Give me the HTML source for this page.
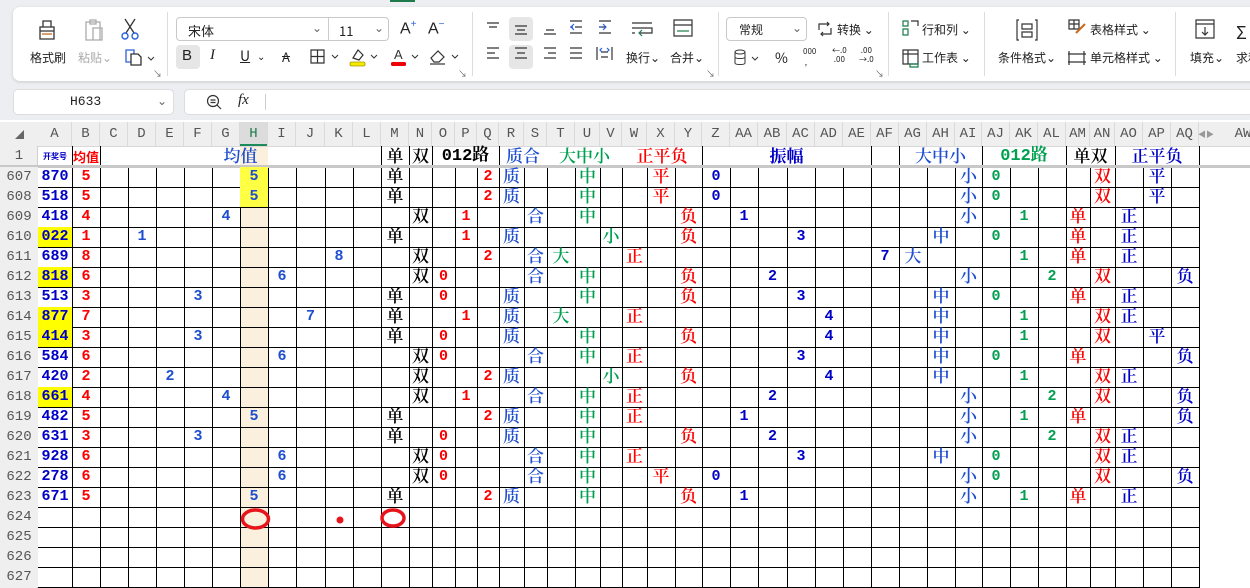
<!DOCTYPE html>
<html><head><meta charset="utf-8">
<style>
*{margin:0;padding:0;box-sizing:border-box}
body{width:1250px;height:588px;overflow:hidden;background:#eceef1;position:relative;font-family:"Liberation Sans","Noto Sans CJK SC",sans-serif;}
.abs{position:absolute}
.card{position:absolute;left:13px;top:7px;width:1250px;height:74px;background:#fff;border-radius:7px;box-shadow:0 1px 3px rgba(0,0,0,.15)}
.t{position:absolute;font-size:12px;color:#222;white-space:nowrap;font-family:"Noto Sans CJK SC",sans-serif}
.sep{position:absolute;top:12px;width:1px;height:64px;background:#dcdcdc}
.box{position:absolute;border:1px solid #c9c9c9;border-radius:4px;background:#fff}
.grid{position:absolute;left:0;width:1250px;height:20px;display:grid;grid-template-columns:38px 34px 28px 28px 28px 28px 28px 28px 28px 28px 29px 28px 28px 28px 23px 23px 22px 22px 25px 23px 28px 25px 22px 25px 28px 27px 28px 28px 29px 28px 28px 28px 28px 28px 28px 27px 28px 28px 28px 24px 25px 28px 28px 28px;}
.grid>*{grid-row:1;text-align:center;line-height:20px;font-size:17px;font-weight:600;font-family:"Liberation Mono","Noto Serif CJK SC",serif;text-decoration:none;font-style:normal;white-space:nowrap;overflow:visible}
.grid>i:not(.dg):not(.rd):not(.bd):not(.gd):not(.cA):not(.cB){position:relative;top:2px}
.grid>s{grid-column:1;color:#555;font-size:14px;font-weight:normal;background:#efefef;font-family:"Liberation Mono",monospace}
.cA{grid-column:2;color:#0000c8;font-weight:bold!important;font-size:15px!important}
.cB{grid-column:3;color:#f00;font-weight:bold!important;font-size:15px!important}
.cC{grid-column:4}.cD{grid-column:5}.cE{grid-column:6}.cF{grid-column:7}.cG{grid-column:8}.cH{grid-column:9}.cI{grid-column:10}.cJ{grid-column:11}.cK{grid-column:12}
.dg{color:#1f4fd0;font-size:15px!important;font-weight:bold!important}
.cM{grid-column:14;color:#000}.cN{grid-column:15;color:#000}
.cO{grid-column:16}.cP{grid-column:17}.cQ{grid-column:18}
.rd{color:#f00;font-weight:bold;font-size:15px!important}
.cR{grid-column:19;color:#1f4fd0}.cS{grid-column:20;color:#1f4fd0}
.cT{grid-column:21;color:#00a050}.cU{grid-column:22;color:#00a050}.cV{grid-column:23;color:#00a050}
.cW{grid-column:24;color:#f00}.cX{grid-column:25;color:#f00}.cY{grid-column:26;color:#f00}
.cZ{grid-column:27}.cAA{grid-column:28}.cAB{grid-column:29}.cAC{grid-column:30}.cAD{grid-column:31}.cAF{grid-column:33}
.bd{color:#0000c8;font-weight:bold;font-size:15px!important}
.cAG{grid-column:34;color:#1f4fd0}.cAH{grid-column:35;color:#1f4fd0}.cAI{grid-column:36;color:#1f4fd0}
.cAJ{grid-column:37}.cAK{grid-column:38}.cAL{grid-column:39}
.gd{color:#00a050;font-weight:bold;font-size:15px!important}
.cAM{grid-column:40;color:#f00}.cAN{grid-column:41;color:#f00}
.cAO{grid-column:42;color:#0000c8}.cAP{grid-column:43;color:#0000c8}.cAQ{grid-column:44;color:#0000c8}
.yl{background:#ffff00}.yh{background:#ffff44}
.ch{position:absolute;top:122px;height:24px;line-height:24px;text-align:center;color:#555;font-size:14px;font-family:"Liberation Mono",monospace;border-right:1px solid #dadada}
.h1{position:absolute;top:147px;height:19px;line-height:23px;text-align:center;font-size:17px;font-family:"Liberation Mono","Noto Serif CJK SC",serif;font-weight:600;white-space:nowrap;overflow:visible}
</style></head><body>
<div class="abs" style="left:390px;top:0;width:25px;height:2px;background:#1e7b4c"></div>
<div class="card"></div>
<svg class="abs" style="left:30px;top:15px" width="130" height="28" viewBox="0 0 130 28">
 <path d="M10 12h14v12H10z M13 12V6h8v6 M10 16h14" fill="none" stroke="#333" stroke-width="1.3"/><path d="M12 19h10" stroke="#c86a1a" stroke-width="1.3"/>
 <path d="M56 7h14v18H56z M60 5h6v4h-6z M63 13h9v12h-9z" fill="none" stroke="#aaa" stroke-width="1.3"/>
 <path d="M95 4l9 14M105 4l-9 14" stroke="#333" stroke-width="1.3"/><circle cx="95" cy="21" r="3" fill="none" stroke="#2a62d9" stroke-width="1.4"/><circle cx="105" cy="21" r="3" fill="none" stroke="#2a62d9" stroke-width="1.4"/>
</svg>
<div class="t" style="left:30px;top:49px">格式刷</div>
<div class="t" style="left:78px;top:49px;color:#aaa">粘贴⌄</div>
<svg class="abs" style="left:124px;top:48px" width="34" height="18"><path d="M2 2h8v12H2z" fill="none" stroke="#2a62d9" stroke-width="1.3"/><path d="M7 6h7l3 3v8H7z" fill="#fff" stroke="#333" stroke-width="1.3"/><path d="M24 9l3 3 3-3" fill="none" stroke="#333"/></svg>
<div class="t" style="left:153px;top:67px;font-size:9px;color:#666">↘</div>
<div class="sep" style="left:167px"></div>
<div class="box" style="left:176px;top:17px;width:213px;height:24px"></div>
<div class="abs" style="left:328px;top:18px;width:1px;height:22px;background:#ccc"></div>
<div class="t" style="left:188px;top:21px;font-size:13px">宋体</div>
<div class="t" style="left:312px;top:19px;color:#666">⌄</div>
<div class="t" style="left:339px;top:21px;font-size:13px">11</div>
<div class="t" style="left:374px;top:19px;color:#666">⌄</div>
<div class="t" style="left:400px;top:19px;font-size:16px;font-family:'Liberation Sans'">A<sup style="font-size:10px;color:#2a62d9">+</sup></div>
<div class="t" style="left:428px;top:19px;font-size:16px;font-family:'Liberation Sans'">A<sup style="font-size:10px;color:#2a62d9">−</sup></div>
<div class="abs" style="left:176px;top:45px;width:24px;height:24px;background:#e6e6e6;border-radius:4px"></div>
<div class="t" style="left:182px;top:47px;font-size:15px;font-family:'Liberation Sans'">B</div>
<div class="t" style="left:210px;top:47px;font-size:15px;font-family:'Liberation Serif';font-style:italic">I</div>
<div class="t" style="left:240px;top:46px;font-size:14px;text-decoration:underline">U</div><div class="t" style="left:257px;top:48px;font-size:10px">⌄</div>
<div class="t" style="left:282px;top:47px;font-size:13px;text-decoration:line-through">A</div>
<svg class="abs" style="left:310px;top:48px" width="30" height="18"><path d="M1 2h13v13H1zM7.5 2v13M1 8.5h13" fill="none" stroke="#333" stroke-width="1.2"/><path d="M22 7l3 3 3-3" fill="none" stroke="#333"/></svg>
<svg class="abs" style="left:349px;top:46px" width="30" height="22"><path d="M4 12l5-8 5 5-4 5z" fill="none" stroke="#333" stroke-width="1.2"/><rect x="1" y="16" width="15" height="4" rx="1.5" fill="#f5e800" stroke="#aa9a00" stroke-width=".8"/><path d="M22 9l3 3 3-3" fill="none" stroke="#333"/></svg>
<svg class="abs" style="left:390px;top:46px" width="30" height="22"><text x="4" y="13" font-size="13" font-family="Liberation Sans" fill="#333">A</text><rect x="1" y="16" width="15" height="4" rx="1.5" fill="#e00"/><path d="M22 9l3 3 3-3" fill="none" stroke="#333"/></svg>
<svg class="abs" style="left:429px;top:46px" width="32" height="22"><path d="M2 12l7-7 6 6-5 5H5z" fill="none" stroke="#333" stroke-width="1.2"/><path d="M1 18h15" stroke="#333" stroke-width="1.2"/><path d="M23 9l3 3 3-3" fill="none" stroke="#333"/></svg>
<div class="t" style="left:458px;top:67px;font-size:9px;color:#666">↘</div>
<div class="sep" style="left:472px"></div>
<div class="abs" style="left:509px;top:17px;width:24px;height:24px;background:#e6e6e6;border-radius:4px"></div>
<div class="abs" style="left:509px;top:45px;width:24px;height:24px;background:#e6e6e6;border-radius:4px"></div>
<svg class="abs" style="left:484px;top:18px" width="230" height="52" stroke-width="1.2" fill="none">
 <path d="M3 5h12M5 9h8" stroke="#333"/><path d="M31 8h12M33 12h8M31 16h12" stroke="#333"/><path d="M60 16h12M62 12h8" stroke="#333"/>
 <path d="M86 3h12M91 9h7M86 15h12" stroke="#333"/><path d="M90 6l-3 3 3 3M86 9h3" stroke="#2a62d9"/>
 <path d="M115 3h12M115 9h7M115 15h12" stroke="#333"/><path d="M119 6l3 3-3 3M115 9h3" stroke="#2a62d9"/>
 <path d="M148 5h20M148 10h20v5h-12M148 15h3" stroke="#333"/><path d="M158 12l-3 3 3 3" stroke="#1e7b4c"/>
 <path d="M190 2h18v16h-18zM190 7h18" stroke="#333"/><path d="M193 13h12" stroke="#1e7b4c"/>
 <path d="M3 30h12M3 35h8M3 40h12" stroke="#333"/><path d="M31 30h12M33 35h8M31 40h12" stroke="#333"/><path d="M60 30h12M64 35h8M60 40h12" stroke="#333"/><path d="M86 30h12M86 35h12M86 40h12" stroke="#333"/>
 <path d="M113 29v13M128 29v13M117 34h7M117 39h7" stroke="#333"/><path d="M118 30l-2 2 2 2M123 30l2 2-2 2" stroke="#2a62d9"/>
</svg>
<div class="t" style="left:626px;top:49px">换行⌄</div>
<div class="t" style="left:670px;top:49px">合并⌄</div>
<div class="t" style="left:706px;top:67px;font-size:9px;color:#666">↘</div>
<div class="sep" style="left:718px"></div>
<div class="box" style="left:726px;top:17px;width:81px;height:24px"></div>
<div class="t" style="left:739px;top:21px">常规</div><div class="t" style="left:792px;top:19px;color:#666">⌄</div>
<svg class="abs" style="left:817px;top:21px" width="16" height="16"><path d="M4 3H2v6M12 13h2V7M2 3h10M14 13H4M10 1l2 2-2 2M6 11l-2 2 2 2" fill="none" stroke="#333" stroke-width="1.2"/></svg>
<div class="t" style="left:837px;top:21px">转换 ⌄</div>
<svg class="abs" style="left:734px;top:49px" width="30" height="18"><ellipse cx="6" cy="3" rx="5" ry="2" fill="none" stroke="#333"/><path d="M1 3v11c0 2 10 2 10 0V3M1 8c0 2 10 2 10 0" fill="none" stroke="#333"/><path d="M18 8l3 3 3-3" fill="none" stroke="#333"/></svg>
<div class="t" style="left:775px;top:48px;font-size:14px">%</div>
<div class="t" style="left:803px;top:46px;font-size:8px">000<br>&nbsp;,</div>
<div class="t" style="left:832px;top:46px;font-size:8px;line-height:9px">←.0<br>&nbsp;.00</div>
<div class="t" style="left:859px;top:46px;font-size:8px;line-height:9px">&nbsp;.00<br>→.0</div>
<div class="t" style="left:875px;top:67px;font-size:9px;color:#666">↘</div>
<div class="sep" style="left:888px"></div>
<svg class="abs" style="left:902px;top:20px" width="18" height="50" fill="none" stroke-width="1.2"><path d="M1 1h5v5H1zM1 9h5v6H1z" stroke="#1e7b4c"/><path d="M9 1h7v5" stroke="#333"/><path d="M1 30h15v14H1zM1 34h15M6 30v14" stroke="#333"/><path d="M8 44h8v3H8z" stroke="#1e7b4c"/></svg>
<div class="t" style="left:922px;top:21px">行和列 ⌄</div>
<div class="t" style="left:922px;top:49px">工作表 ⌄</div>
<div class="sep" style="left:984px"></div>
<svg class="abs" style="left:1016px;top:19px" width="22" height="22" fill="none" stroke="#333" stroke-width="1.2"><path d="M3 1H1v20h2M19 1h2v20h-2M6 5h10v5H6zM6 13h10v5H6z"/></svg>
<div class="t" style="left:998px;top:49px">条件格式⌄</div>
<svg class="abs" style="left:1068px;top:19px" width="20" height="50" fill="none" stroke-width="1.2"><path d="M1 1h10v9H1zM1 5h10M6 1v9" stroke="#333"/><path d="M8 14l9-9" stroke="#c86a1a" stroke-width="2"/><path d="M1 32v14M16 32v14M-1 35h19M-1 43h19" stroke="#333"/></svg>
<div class="t" style="left:1090px;top:21px">表格样式 ⌄</div>
<div class="t" style="left:1090px;top:49px">单元格样式 ⌄</div>
<div class="sep" style="left:1175px"></div>
<svg class="abs" style="left:1195px;top:19px" width="22" height="22" fill="none" stroke="#333" stroke-width="1.2"><path d="M1 1h18v18H1zM1 5h18M10 8v8M7 13l3 3 3-3"/></svg>
<div class="t" style="left:1190px;top:49px">填充⌄</div>
<div class="t" style="left:1236px;top:19px;font-size:18px">Σ</div>
<div class="t" style="left:1236px;top:49px">求和</div>
<div class="abs" style="left:13px;top:89px;width:161px;height:26px;background:#fff;border-radius:5px;border:1px solid #ddd"></div>
<div class="t" style="left:70px;top:94px;font-size:13px;font-family:'Liberation Mono'">H633</div>
<div class="t" style="left:157px;top:92px;color:#666">⌄</div>
<div class="abs" style="left:184px;top:89px;width:1070px;height:26px;background:#fff;border-radius:5px;border:1px solid #ddd"></div>
<svg class="abs" style="left:206px;top:94px" width="16" height="16" fill="none" stroke="#333" stroke-width="1.2"><circle cx="7" cy="7" r="5.5"/><path d="M11 11l4 4M4.5 6h5M4.5 8.5h5"/></svg>
<div class="t" style="left:238px;top:92px;font-size:15px;font-family:'Liberation Serif';font-style:italic">fx</div>
<div class="abs" style="left:265px;top:94px;width:1px;height:16px;background:#ccc"></div>
<div class="abs" style="left:0;top:120px;width:1250px;height:468px;background:#fff"></div>
<div class="abs" style="left:0;top:122px;width:1250px;height:25px;background:#efefef;border-bottom:1px solid #d8d8d8"></div>
<div class="abs" style="left:0;top:146px;width:38px;height:442px;background:#efefef;border-right:1px solid #d0d0d0"></div>
<div class="abs" style="left:240px;top:147px;width:28px;height:441px;background:#fbf0de"></div>
<div class="abs" style="left:240px;top:122px;width:28px;height:24px;background:#dcdcdc;border-bottom:2px solid #1e8a5a"></div>
<div class="t" style="left:15px;top:128px;font-size:9px;color:#666">◢</div>
<div class="ch" style="left:38px;width:34px">A</div><div class="ch" style="left:72px;width:28px">B</div><div class="ch" style="left:100px;width:28px">C</div><div class="ch" style="left:128px;width:28px">D</div><div class="ch" style="left:156px;width:28px">E</div><div class="ch" style="left:184px;width:28px">F</div><div class="ch" style="left:212px;width:28px">G</div><div class="ch" style="left:240px;width:28px;color:#1e7b4c">H</div><div class="ch" style="left:268px;width:28px">I</div><div class="ch" style="left:296px;width:29px">J</div><div class="ch" style="left:325px;width:28px">K</div><div class="ch" style="left:353px;width:28px">L</div><div class="ch" style="left:381px;width:28px">M</div><div class="ch" style="left:409px;width:23px">N</div><div class="ch" style="left:432px;width:23px">O</div><div class="ch" style="left:455px;width:22px">P</div><div class="ch" style="left:477px;width:22px">Q</div><div class="ch" style="left:499px;width:25px">R</div><div class="ch" style="left:524px;width:23px">S</div><div class="ch" style="left:547px;width:28px">T</div><div class="ch" style="left:575px;width:25px">U</div><div class="ch" style="left:600px;width:22px">V</div><div class="ch" style="left:622px;width:25px">W</div><div class="ch" style="left:647px;width:28px">X</div><div class="ch" style="left:675px;width:27px">Y</div><div class="ch" style="left:702px;width:28px">Z</div><div class="ch" style="left:730px;width:28px">AA</div><div class="ch" style="left:758px;width:29px">AB</div><div class="ch" style="left:787px;width:28px">AC</div><div class="ch" style="left:815px;width:28px">AD</div><div class="ch" style="left:843px;width:28px">AE</div><div class="ch" style="left:871px;width:28px">AF</div><div class="ch" style="left:899px;width:28px">AG</div><div class="ch" style="left:927px;width:28px">AH</div><div class="ch" style="left:955px;width:27px">AI</div><div class="ch" style="left:982px;width:28px">AJ</div><div class="ch" style="left:1010px;width:28px">AK</div><div class="ch" style="left:1038px;width:28px">AL</div><div class="ch" style="left:1066px;width:24px">AM</div><div class="ch" style="left:1090px;width:25px">AN</div><div class="ch" style="left:1115px;width:28px">AO</div><div class="ch" style="left:1143px;width:28px">AP</div><div class="ch" style="left:1171px;width:28px">AQ</div>
<div class="t" style="left:1198px;top:129px;font-size:8px;color:#999">◀▶</div>
<div class="ch" style="left:1228px;width:30px;border:none">AW</div>
<div class="abs" style="left:0;top:147px;width:38px;height:19px;line-height:19px;text-align:center;color:#555;font-size:14px;font-family:'Liberation Mono'">1</div>
<div class="h1" style="left:38px;width:34px;font-size:8px;line-height:19px;color:#0000c8;font-family:'Noto Sans CJK SC',sans-serif">开奖号</div>
<div class="h1" style="left:72px;width:28px;font-size:13px;line-height:19px;color:#f00;font-family:'Noto Sans CJK SC',sans-serif;font-weight:bold">均值</div>
<div class="h1" style="left:100px;width:281px;color:#1f4fd0">均值</div>
<div class="h1" style="left:381px;width:28px">单</div>
<div class="h1" style="left:409px;width:23px">双</div>
<div class="h1" style="left:432px;width:67px;font-weight:bold;line-height:19px">012路</div>
<div class="h1" style="left:499px;width:48px;color:#1f4fd0">质合</div>
<div class="h1" style="left:547px;width:75px;color:#00a050">大中小</div>
<div class="h1" style="left:622px;width:80px;color:#f00">正平负</div>
<div class="h1" style="left:702px;width:169px;color:#0000c8;font-weight:bold">振幅</div>
<div class="h1" style="left:899px;width:83px;color:#1f4fd0">大中小</div>
<div class="h1" style="left:982px;width:84px;color:#00a050;font-weight:bold;line-height:19px">012路</div>
<div class="h1" style="left:1066px;width:49px">单双</div>
<div class="h1" style="left:1115px;width:84px;color:#0000c8">正平负</div>
<svg class="abs" style="left:0;top:146px" width="1250" height="442">
<g stroke="#000" stroke-width="1" shape-rendering="crispEdges">
<path d="M72.5 0v20M100.5 0v20M381.5 0v20M409.5 0v20M432.5 0v20M499.5 0v20M702.5 0v20M871.5 0v20M899.5 0v20M982.5 0v20M1066.5 0v20M1115.5 0v20M1199.5 0v20"/>
<path d="M72.5 21V442M100.5 21V442M128.5 21V442M156.5 21V442M184.5 21V442M212.5 21V442M240.5 21V442M268.5 21V442M296.5 21V442M325.5 21V442M353.5 21V442M381.5 21V442M409.5 21V442M432.5 21V442M455.5 21V442M477.5 21V442M499.5 21V442M524.5 21V442M547.5 21V442M575.5 21V442M600.5 21V442M622.5 21V442M647.5 21V442M675.5 21V442M702.5 21V442M730.5 21V442M758.5 21V442M787.5 21V442M815.5 21V442M843.5 21V442M871.5 21V442M899.5 21V442M927.5 21V442M955.5 21V442M982.5 21V442M1010.5 21V442M1038.5 21V442M1066.5 21V442M1090.5 21V442M1115.5 21V442M1143.5 21V442M1171.5 21V442M1199.5 21V442"/>
<path d="M38 41.5H1200M38 61.5H1200M38 81.5H1200M38 101.5H1200M38 121.5H1200M38 141.5H1200M38 161.5H1200M38 181.5H1200M38 201.5H1200M38 221.5H1200M38 241.5H1200M38 261.5H1200M38 281.5H1200M38 301.5H1200M38 321.5H1200M38 341.5H1200M38 361.5H1200M38 381.5H1200M38 401.5H1200M38 421.5H1200M38 441.5H1200"/>
</g>
<g stroke="#d0d0d0" shape-rendering="crispEdges"><path d="M0 40.5H38M0 60.5H38M0 80.5H38M0 100.5H38M0 120.5H38M0 140.5H38M0 160.5H38M0 180.5H38M0 200.5H38M0 220.5H38M0 240.5H38M0 260.5H38M0 280.5H38M0 300.5H38M0 320.5H38M0 340.5H38M0 360.5H38M0 380.5H38M0 400.5H38M0 420.5H38"/></g>
</svg>
<div class="abs" style="left:0;top:165px;width:1250px;height:3px;background:#c8c8c8"></div>
<div class="grid" style="top:167px"><s>607</s><i class="cA">870</i><i class="cB">5</i><i class="cH dg yh">5</i><i class="cM">单</i><i class="cQ rd">2</i><i class="cR">质</i><i class="cU">中</i><i class="cX">平</i><i class="cZ bd">0</i><i class="cAI">小</i><i class="cAJ gd">0</i><i class="cAN">双</i><i class="cAP">平</i></div>
<div class="grid" style="top:187px"><s>608</s><i class="cA">518</i><i class="cB">5</i><i class="cH dg yh">5</i><i class="cM">单</i><i class="cQ rd">2</i><i class="cR">质</i><i class="cU">中</i><i class="cX">平</i><i class="cZ bd">0</i><i class="cAI">小</i><i class="cAJ gd">0</i><i class="cAN">双</i><i class="cAP">平</i></div>
<div class="grid" style="top:207px"><s>609</s><i class="cA">418</i><i class="cB">4</i><i class="cG dg">4</i><i class="cN">双</i><i class="cP rd">1</i><i class="cS">合</i><i class="cU">中</i><i class="cY">负</i><i class="cAA bd">1</i><i class="cAI">小</i><i class="cAK gd">1</i><i class="cAM">单</i><i class="cAO">正</i></div>
<div class="grid" style="top:227px"><s>610</s><i class="cA yl">022</i><i class="cB">1</i><i class="cD dg">1</i><i class="cM">单</i><i class="cP rd">1</i><i class="cR">质</i><i class="cV">小</i><i class="cY">负</i><i class="cAC bd">3</i><i class="cAH">中</i><i class="cAJ gd">0</i><i class="cAM">单</i><i class="cAO">正</i></div>
<div class="grid" style="top:247px"><s>611</s><i class="cA">689</i><i class="cB">8</i><i class="cK dg">8</i><i class="cN">双</i><i class="cQ rd">2</i><i class="cS">合</i><i class="cT">大</i><i class="cW">正</i><i class="cAF bd">7</i><i class="cAG">大</i><i class="cAK gd">1</i><i class="cAM">单</i><i class="cAO">正</i></div>
<div class="grid" style="top:267px"><s>612</s><i class="cA yl">818</i><i class="cB">6</i><i class="cI dg">6</i><i class="cN">双</i><i class="cO rd">0</i><i class="cS">合</i><i class="cU">中</i><i class="cY">负</i><i class="cAB bd">2</i><i class="cAI">小</i><i class="cAL gd">2</i><i class="cAN">双</i><i class="cAQ">负</i></div>
<div class="grid" style="top:287px"><s>613</s><i class="cA">513</i><i class="cB">3</i><i class="cF dg">3</i><i class="cM">单</i><i class="cO rd">0</i><i class="cR">质</i><i class="cU">中</i><i class="cY">负</i><i class="cAC bd">3</i><i class="cAH">中</i><i class="cAJ gd">0</i><i class="cAM">单</i><i class="cAO">正</i></div>
<div class="grid" style="top:307px"><s>614</s><i class="cA yl">877</i><i class="cB">7</i><i class="cJ dg">7</i><i class="cM">单</i><i class="cP rd">1</i><i class="cR">质</i><i class="cT">大</i><i class="cW">正</i><i class="cAD bd">4</i><i class="cAH">中</i><i class="cAK gd">1</i><i class="cAN">双</i><i class="cAO">正</i></div>
<div class="grid" style="top:327px"><s>615</s><i class="cA yl">414</i><i class="cB">3</i><i class="cF dg">3</i><i class="cM">单</i><i class="cO rd">0</i><i class="cR">质</i><i class="cU">中</i><i class="cY">负</i><i class="cAD bd">4</i><i class="cAH">中</i><i class="cAK gd">1</i><i class="cAN">双</i><i class="cAP">平</i></div>
<div class="grid" style="top:347px"><s>616</s><i class="cA">584</i><i class="cB">6</i><i class="cI dg">6</i><i class="cN">双</i><i class="cO rd">0</i><i class="cS">合</i><i class="cU">中</i><i class="cW">正</i><i class="cAC bd">3</i><i class="cAH">中</i><i class="cAJ gd">0</i><i class="cAM">单</i><i class="cAQ">负</i></div>
<div class="grid" style="top:367px"><s>617</s><i class="cA">420</i><i class="cB">2</i><i class="cE dg">2</i><i class="cN">双</i><i class="cQ rd">2</i><i class="cR">质</i><i class="cV">小</i><i class="cY">负</i><i class="cAD bd">4</i><i class="cAH">中</i><i class="cAK gd">1</i><i class="cAN">双</i><i class="cAO">正</i></div>
<div class="grid" style="top:387px"><s>618</s><i class="cA yl">661</i><i class="cB">4</i><i class="cG dg">4</i><i class="cN">双</i><i class="cP rd">1</i><i class="cS">合</i><i class="cU">中</i><i class="cW">正</i><i class="cAB bd">2</i><i class="cAI">小</i><i class="cAL gd">2</i><i class="cAN">双</i><i class="cAQ">负</i></div>
<div class="grid" style="top:407px"><s>619</s><i class="cA">482</i><i class="cB">5</i><i class="cH dg">5</i><i class="cM">单</i><i class="cQ rd">2</i><i class="cR">质</i><i class="cU">中</i><i class="cW">正</i><i class="cAA bd">1</i><i class="cAI">小</i><i class="cAK gd">1</i><i class="cAM">单</i><i class="cAQ">负</i></div>
<div class="grid" style="top:427px"><s>620</s><i class="cA">631</i><i class="cB">3</i><i class="cF dg">3</i><i class="cM">单</i><i class="cO rd">0</i><i class="cR">质</i><i class="cU">中</i><i class="cY">负</i><i class="cAB bd">2</i><i class="cAI">小</i><i class="cAL gd">2</i><i class="cAN">双</i><i class="cAO">正</i></div>
<div class="grid" style="top:447px"><s>621</s><i class="cA">928</i><i class="cB">6</i><i class="cI dg">6</i><i class="cN">双</i><i class="cO rd">0</i><i class="cS">合</i><i class="cU">中</i><i class="cW">正</i><i class="cAC bd">3</i><i class="cAH">中</i><i class="cAJ gd">0</i><i class="cAN">双</i><i class="cAO">正</i></div>
<div class="grid" style="top:467px"><s>622</s><i class="cA">278</i><i class="cB">6</i><i class="cI dg">6</i><i class="cN">双</i><i class="cO rd">0</i><i class="cS">合</i><i class="cU">中</i><i class="cX">平</i><i class="cZ bd">0</i><i class="cAI">小</i><i class="cAJ gd">0</i><i class="cAN">双</i><i class="cAQ">负</i></div>
<div class="grid" style="top:487px"><s>623</s><i class="cA">671</i><i class="cB">5</i><i class="cH dg">5</i><i class="cM">单</i><i class="cQ rd">2</i><i class="cR">质</i><i class="cU">中</i><i class="cY">负</i><i class="cAA bd">1</i><i class="cAI">小</i><i class="cAK gd">1</i><i class="cAM">单</i><i class="cAO">正</i></div>
<div class="grid" style="top:507px"><s>624</s></div>
<div class="grid" style="top:527px"><s>625</s></div>
<div class="grid" style="top:547px"><s>626</s></div>
<div class="grid" style="top:567px"><s>627</s></div>
<svg class="abs" style="left:0;top:0" width="1250" height="588"><g fill="none" stroke="#e8141c" stroke-width="3.5"><ellipse cx="255.5" cy="519" rx="13" ry="9"/><ellipse cx="393" cy="518" rx="11" ry="8"/></g><circle cx="340" cy="520" r="3.5" fill="#e8141c"/></svg>
</body></html>
